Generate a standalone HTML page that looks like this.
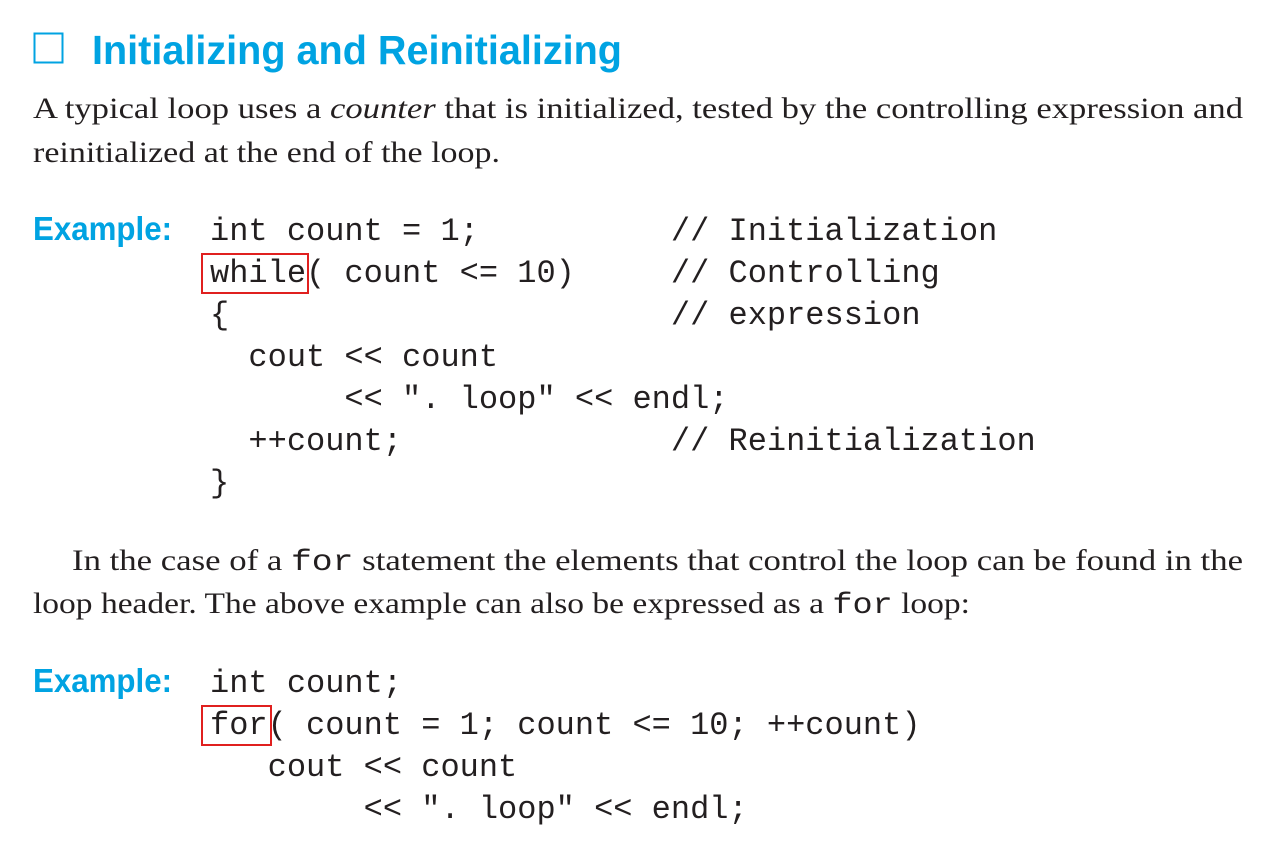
<!DOCTYPE html>
<html><head><meta charset="utf-8"><style>
html,body{margin:0;padding:0;background:#fff;}
svg{display:block}
.h{font-family:"Liberation Sans",sans-serif;font-weight:bold;fill:#00a3e2}
.s{font-family:"Liberation Serif",serif;font-size:30px;fill:#231f20}
.m{font-family:"Liberation Mono",monospace;font-size:32px;fill:#231f20;white-space:pre}
</style></head><body>
<svg width="1280" height="857" viewBox="0 0 1280 857" xmlns="http://www.w3.org/2000/svg" xml:space="preserve">
<rect x="34.5" y="33.5" width="28" height="29" fill="none" stroke="#00a3e2" stroke-width="2"/>
<text class="h" x="92" y="64" font-size="41" textLength="530" lengthAdjust="spacingAndGlyphs">Initializing and Reinitializing</text>

<text class="s" x="33" y="118" textLength="1210" lengthAdjust="spacingAndGlyphs">A typical loop uses a <tspan font-style="italic">counter</tspan> that is initialized, tested by the controlling expression and</text>
<text class="s" x="33" y="162" textLength="467" lengthAdjust="spacingAndGlyphs">reinitialized at the end of the loop.</text>

<text class="h" x="33" y="240" font-size="33" textLength="139" lengthAdjust="spacingAndGlyphs">Example:</text>
<text class="m" x="210" y="240">int count = 1;          // Initialization</text>
<text class="m" x="210" y="282">while( count &lt;= 10)     // Controlling</text>
<text class="m" x="210" y="324">{                       // expression</text>
<text class="m" x="210" y="366">  cout &lt;&lt; count</text>
<text class="m" x="210" y="408">       &lt;&lt; ". loop" &lt;&lt; endl;</text>
<text class="m" x="210" y="450">  ++count;              // Reinitialization</text>
<text class="m" x="210" y="492">}</text>
<rect x="202" y="254" width="106" height="39" fill="none" stroke="#e0201f" stroke-width="2"/>

<text class="s" x="72" y="570" textLength="1171" lengthAdjust="spacingAndGlyphs">In the case of a <tspan class="m" style="font-size:30px">for</tspan> statement the elements that control the loop can be found in the</text>
<text class="s" x="33" y="613" textLength="937" lengthAdjust="spacingAndGlyphs">loop header. The above example can also be expressed as a <tspan class="m" style="font-size:30px">for</tspan> loop:</text>

<text class="h" x="33" y="692" font-size="33" textLength="139" lengthAdjust="spacingAndGlyphs">Example:</text>
<text class="m" x="210" y="692">int count;</text>
<text class="m" x="210" y="734">for( count = 1; count &lt;= 10; ++count)</text>
<text class="m" x="210" y="776">   cout &lt;&lt; count</text>
<text class="m" x="210" y="818">        &lt;&lt; ". loop" &lt;&lt; endl;</text>
<rect x="202" y="706" width="69" height="39" fill="none" stroke="#e0201f" stroke-width="2"/>
</svg>
</body></html>
